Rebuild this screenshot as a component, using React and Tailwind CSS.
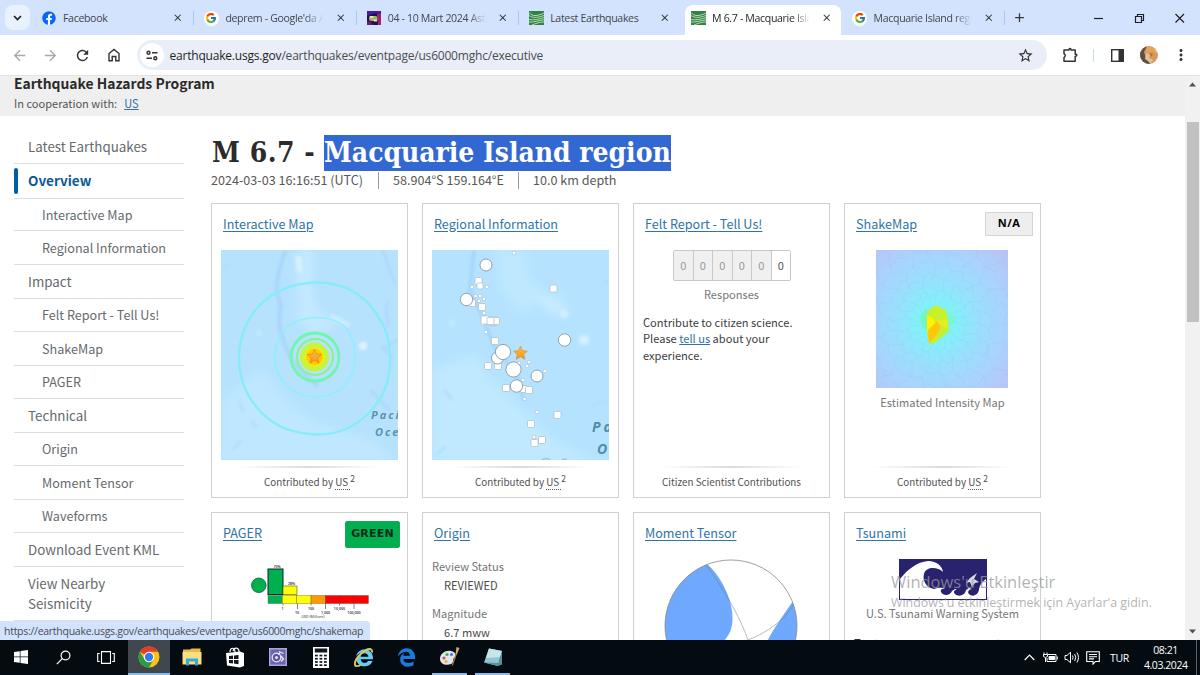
import React from "react";
import { FaFacebook, FaInternetExplorer, FaEdgeLegacy } from "react-icons/fa";
import { FcGoogle } from "react-icons/fc";
import {
  MdArrowBack,
  MdArrowForward,
  MdRefresh,
  MdStarBorder,
  MdOutlineExtension,
  MdMoreVert,
  MdClose,
  MdAdd,
} from "react-icons/md";

const STAR = "M0 -8 L2.3 -2.6 L8 -2.2 L3.7 1.6 L5 7.4 L0 4.3 L-5 7.4 L-3.7 1.6 L-8 -2.2 L-2.3 -2.6Z";

/* ---------- favicons ---------- */

function UsgsIcon() {
  return (
    <svg width="15" height="14" viewBox="0 0 15 14">
      <rect width="15" height="14" fill="#2f8440" />
      <path d="M0 1.500 C3 5.500 8 5.500 15 2 M0 4.500 C4 7.500 9 6.500 15 4.500 M0 8.500 C5 9.500 10 8 15 6.600 M0 11 C5 11.500 9 9.500 15 8.800 M3 14 C7 12.500 10 11 15 11" fill="none" stroke="#d8ecd9" strokeWidth="0.8" />
    </svg>
  );
}

function AstroIcon() {
  return (
    <svg width="14" height="14" viewBox="0 0 14 14">
      <rect width="14" height="14" fill="#1c1450" />
      <path d="M0 0H14V4L8 2L0 5Z" fill="#4a1a9a" />
      <path d="M10 3H14V14H11Z" fill="#a3206c" />
      <path d="M0 10L4 11L6 14H0Z" fill="#6a1c7a" />
      <rect x="2" y="5" width="8.500" height="5" rx="2" fill="#9db06a" />
      <path d="M2.500 5h4v2H3.500zM6 8.500h4v2H7z" fill="#e8e6a0" />
    </svg>
  );
}

function GoogleIcon() {
  return (
    <span className="flex size-[15px] items-center justify-center rounded-full bg-white">
      <FcGoogle size={12} />
    </span>
  );
}

/* ---------- browser chrome ---------- */

function Tab({ icon, title, active, divider, fade }) {
  return (
    <div
      className={
        active
          ? "flex h-[30px] w-[156px] shrink-0 items-center rounded-t-[8px] bg-white pb-[4px] pl-[6px]"
          : "flex h-[30px] w-[162.4px] shrink-0 items-center pb-[4px] pl-[9.5px]"
      }
    >
      <span className="flex w-[15px] shrink-0 justify-center">{icon}</span>
      <span
        className={
          "ml-[6.5px] w-[100px] overflow-hidden whitespace-nowrap text-[10.6px] leading-4 tracking-[-0.35px] [font-family:'Open_Sans',sans-serif] " +
          (active ? "text-[#1f1f1f] " : "text-[#42474e] ") +
          (fade ? "[mask-image:linear-gradient(to_right,black_80%,transparent_98%)]" : "")
        }
      >
        {title}
      </span>
      <span className="ml-[9px] flex w-[12px] shrink-0 justify-center text-[#30343b]">
        <MdClose size={11.5} />
      </span>
      {divider && <span className="ml-auto h-[14px] w-px bg-[#a8c7fa]" />}
    </div>
  );
}

function TabStrip() {
  return (
    <div className="flex h-[35px] shrink-0 items-end bg-[#d3e3fd]">
      <div className="flex h-full w-[32px] shrink-0 items-center pl-[5px]">
        <div className="flex size-[25px] items-center justify-center rounded-[8px] bg-[#e9f1fe]">
          <svg width="9" height="6" viewBox="0 0 9 6">
            <path d="M1 1L4.5 4.5L8 1" fill="none" stroke="#1f1f1f" strokeWidth="1.7" />
          </svg>
        </div>
      </div>
      <Tab icon={<span className="rounded-full bg-white text-[#0866ff]"><FaFacebook size={14} /></span>} title="Facebook" divider />
      <Tab icon={<GoogleIcon />} title="deprem - Google'da Ara" divider fade />
      <Tab icon={<AstroIcon />} title="04 - 10 Mart 2024 Astroloji" divider fade />
      <Tab icon={<UsgsIcon />} title="Latest Earthquakes" />
      <div className="ml-[3px]">
        <Tab icon={<UsgsIcon />} title="M 6.7 - Macquarie Island region" active fade />
      </div>
      <div className="ml-[2px]">
        <Tab icon={<GoogleIcon />} title="Macquarie Island region" divider fade />
      </div>
      <div className="flex h-[35px] flex-1 items-center pl-[7px] text-[#30343b]">
        <MdAdd size={15} />
        <svg className="ml-[64px]" width="110" height="16" viewBox="0 0 110 16" fill="none" stroke="#1f1f1f" strokeWidth="1.2">
          <path d="M3 8.5H12" />
          <path d="M44.5 6.500H50.500V12.500H44.500Z M46.500 6.500V4.500H52.500V10.500H50.500" />
          <path d="M84.500 4L93 12.500M93 4L84.500 12.500" />
        </svg>
      </div>
    </div>
  );
}

function Toolbar() {
  return (
    <div className="flex h-[41px] shrink-0 items-center border-b border-[#e3e3e3] bg-white text-[#474747]">
      <div className="flex w-[137px] shrink-0 items-center">
        <span className="ml-[11px] text-[#a9a9a9]"><MdArrowBack size={17} /></span>
        <span className="ml-[14px] text-[#a9a9a9]"><MdArrowForward size={17} /></span>
        <span className="ml-[15px] text-[#333]"><MdRefresh size={17} /></span>
        <svg className="ml-[17px]" width="12" height="14" viewBox="0 0 12 14" fill="none" stroke="#333" strokeWidth="1.4">
          <path d="M1 5.500L6 1.500L11 5.500V12.700H7.800V8.500H4.200V12.700H1Z" />
        </svg>
      </div>
      <div className="flex h-[30px] w-[910px] shrink-0 items-center rounded-full bg-[#e9eef8] pl-[3px]">
        <span className="flex size-[24px] items-center justify-center rounded-full bg-white">
          <svg width="12" height="11" viewBox="0 0 12 11" fill="none" stroke="#333" strokeWidth="1.4">
            <circle cx="2.500" cy="2.700" r="1.500" />
            <path d="M6 2.700H11.500M0.500 8.300H6" />
            <circle cx="9.300" cy="8.300" r="1.500" />
          </svg>
        </span>
        <span className="ml-[5.500px] pt-[1px] whitespace-nowrap text-[12px] leading-4 tracking-[-0.200px] text-[#4a4d52] [font-family:'Open_Sans',sans-serif]">
          <span className="text-[#1f1f1f]">earthquake.usgs.gov</span>/earthquakes/eventpage/us6000mghc/executive
        </span>
        <span className="mr-[13px] ml-auto text-[#333]"><MdStarBorder size={17} /></span>
      </div>
      <svg className="ml-[16px]" width="16" height="16" viewBox="0 0 16 16" fill="none" stroke="#333" strokeWidth="1.500" strokeLinejoin="round">
        <path d="M1 3H6V2.200Q7 0.800 8 2.200V3H12.200V7.200H13Q14.600 8.200 13 9.200H12.200V14.200H1V10.600Q3.600 8.600 1 6.600Z" />
      </svg>
      <span className="ml-[14px] h-[13px] w-px bg-[#c7dafa]" />
      <svg className="ml-[17px]" width="13" height="13" viewBox="0 0 13 13">
        <rect x="0.700" y="0.700" width="11.600" height="11.600" fill="none" stroke="#333" strokeWidth="1.400" />
        <rect x="7.500" y="1" width="5" height="11" fill="#333" />
      </svg>
      <svg className="ml-[16px]" width="18" height="18" viewBox="0 0 18 18">
        <clipPath id="avatar"><circle cx="9" cy="9" r="9" /></clipPath>
        <g clipPath="url(#avatar)">
          <rect width="18" height="18" fill="#d9985a" />
          <path d="M0 0H7L4 6L6 12L10 18H0Z" fill="#5d5046" />
          <path d="M7 0L16 3L17 8L12 5L6 7Z" fill="#e3a463" />
          <path d="M6 7L10 9L9 12L13 14L11 17L5 13Z" fill="#dcc3a4" />
          <path d="M10 7l3 1-2 3z" fill="#b9662c" />
          <path d="M15 0H18V7L16 5Z" fill="#fff" />
        </g>
      </svg>
      <span className="ml-[14px] text-[#333]"><MdMoreVert size={18} /></span>
    </div>
  );
}

/* ---------- page sidebar ---------- */

const NAV = [
  { label: "Latest Earthquakes", h: "h-[34px]" },
  { label: "Overview", h: "h-[35px]", current: true },
  { label: "Interactive Map", h: "h-[32px]", sub: true },
  { label: "Regional Information", h: "h-[34px]", sub: true },
  { label: "Impact", h: "h-[34px]" },
  { label: "Felt Report - Tell Us!", h: "h-[33px]", sub: true },
  { label: "ShakeMap", h: "h-[34px]", sub: true },
  { label: "PAGER", h: "h-[33px]", sub: true },
  { label: "Technical", h: "h-[34px]" },
  { label: "Origin", h: "h-[33px]", sub: true },
  { label: "Moment Tensor", h: "h-[34px]", sub: true },
  { label: "Waveforms", h: "h-[33px]", sub: true },
  { label: "Download Event KML", h: "h-[34px]" },
  { label: "View Nearby Seismicity", h: "h-[54px]" },
];

function Sidebar() {
  return (
    <nav className="ml-[14px] w-[170px] shrink-0 pt-[14px]">
      {NAV.map((n) => (
        <div key={n.label} className={"flex items-center border-b border-[#dcdee0] " + n.h}>
          {n.current && <span className="h-[26px] w-[4px] rounded-full bg-[#005ea2]" />}
          <a
            className={
              "leading-[19.500px] " +
              (n.current
                ? "pl-[10px] text-[13.500px] font-bold text-[#0a5a99]"
                : n.sub
                  ? "pl-[28px] text-[12.600px] text-[#666a6e]"
                  : "w-[150px] pl-[14px] text-[13.350px] text-[#666a6e]")
            }
          >
            {n.label}
          </a>
        </div>
      ))}
    </nav>
  );
}

/* ---------- cards ---------- */

function Card({ title, badge, children, footer }) {
  return (
    <section className="flex h-[295px] w-[197px] flex-col border border-[#d0d0d0] bg-white">
      <header className="flex h-[46px] shrink-0 items-center justify-between pr-[7px] pb-[7px] pl-[11px]">
        <a className="text-[12.600px] leading-4 text-[#2e74a8] underline underline-offset-2">{title}</a>
        {badge}
      </header>
      <div className="flex flex-1 flex-col">{children}</div>
      {footer && (
        <footer className="shrink-0 pb-[7px]">
          <div className="mx-[28px] h-[2px] bg-[linear-gradient(to_right,transparent,#dadada,transparent)]" />
          <div className="mt-[6px] text-center text-[9.850px] leading-4 text-[#505050]">{footer}</div>
        </footer>
      )}
    </section>
  );
}

function Contributed() {
  return (
    <span>
      Contributed by <span className="border-b border-dotted border-[#555]">US </span>
      <sup className="text-[8.500px]">2</sup>
    </span>
  );
}

function Star({ x, y, s }) {
  return <path d={STAR} transform={`translate(${x} ${y}) scale(${s})`} fill="url(#starFill)" stroke="#e08a1e" strokeWidth="0.8" strokeLinejoin="round" />;
}

function MapDefs() {
  return (
    <defs>
      <linearGradient id="starFill" x1="0" y1="0" x2="0" y2="1">
        <stop offset="0" stopColor="#ffc13a" />
        <stop offset="1" stopColor="#f7941d" />
      </linearGradient>
      <filter id="soft" x="-50%" y="-50%" width="200%" height="200%"><feGaussianBlur stdDeviation="4" /></filter>
      <filter id="softer" x="-50%" y="-50%" width="200%" height="200%"><feGaussianBlur stdDeviation="1.800" /></filter>
    </defs>
  );
}

function InteractiveMap() {
  return (
    <svg className="ml-[9px] h-[210px] w-[177px] shrink-0" viewBox="0 0 177 210">
      <MapDefs />
      <rect width="177" height="211" fill="#b6e2fe" />
      <g filter="url(#soft)">
        <path d="M78 0L92 0L90 40L100 70L84 74L76 40Z" fill="#c5eaff" />
        <path d="M0 150L40 120L66 150L90 170L150 190L177 211H0Z" fill="#bfe7ff" />
        <path d="M70 60L100 62L116 78L90 84Z" fill="#c3e9ff" />
      </g>
      <g filter="url(#softer)" fill="none">
        <path d="M65 0C57 20 52 38 60 56C54 78 64 95 72 112C82 124 90 130 97 136" stroke="#a9d6f8" strokeWidth="4" />
        <path d="M162 0L174 34M168 52C160 60 170 66 166 78M177 90L162 98L172 108M168 160L150 140" stroke="#add9f8" strokeWidth="3" />
        <path d="M0 22L6 14M18 150L22 162M12 200L20 190M30 170L36 178" stroke="#b4def9" strokeWidth="3" />
        <path d="M77 6L79 22" stroke="#d7f1ff" strokeWidth="6" />
        <path d="M110 66L128 76" stroke="#ccedff" strokeWidth="6" />
        <circle cx="142" cy="96" r="4" fill="#dff4ff" />
        <circle cx="38" cy="83" r="2.500" fill="#caecff" />
      </g>
      <path d="M94 32.500Q134 32 155 63Q170 84 169 108Q170 141 148 163Q127 184 98 184.500Q61 184 41 163Q18 140 18 108Q18 79 37 57Q58 34 94 32.500Z" fill="none" stroke="#86ecfb" strokeWidth="2.400" />
      <path d="M94 67.500Q115 67 126 79Q135 92 134 108Q133 128 120 139Q108 147 94 147Q76 146 65 135Q53 122 54 107Q54 91 64 79Q76 68 94 67.500Z" fill="none" stroke="#8ff0fa" strokeWidth="1.700" />
      <circle cx="94" cy="107" r="24" fill="none" stroke="#6ef7ad" strokeWidth="2.800" />
      <circle cx="94" cy="107" r="18" fill="none" stroke="#83f583" strokeWidth="1.800" />
      <circle cx="93.500" cy="107" r="12" fill="#fff000" stroke="#c5f43d" strokeWidth="5" />
      <circle cx="93.500" cy="107" r="8.500" fill="#ffcc00" />
      <Star x={93.500} y={106.500} s={0.900} />
      <g className="[font-family:'Open_Sans',sans-serif]" fill="#5b92ad" fontSize="11" fontWeight="700" fontStyle="italic" letterSpacing="2">
        <text x="150" y="169">Pacific</text>
        <text x="154" y="186">Ocean</text>
      </g>
    </svg>
  );
}

const SQUARES = [
  [46.500, 31, 7], [48, 36, 6], [121.500, 38.500, 7], [40, 53, 7], [50, 57, 7], [53, 70, 8], [61, 71, 9], [64, 71, 7],
  [58.500, 71, 7], [63, 91, 7], [56, 116, 7], [66, 116, 7], [74, 138, 7], [92, 139, 7], [97, 140, 7], [125.500, 165, 7],
  [99, 174, 7], [110, 190, 7], [102.500, 193, 7],
];
const DOTS = [
  [82, 3], [40, 37], [55, 37], [43.500, 46], [48, 46], [52, 49], [47, 51], [52, 63], [51, 74], [62, 75], [54, 82],
  [97, 112], [95, 116], [113, 121], [91, 130], [92.500, 149], [105, 162], [102, 187], [87, 113],
];
const CIRCLES = [
  [54, 15, 6], [34.500, 49.500, 6.200], [132.500, 90, 6.200], [65.500, 108, 6], [71, 102, 7.600], [81.500, 119.500, 7.600],
  [105, 126, 6], [84.500, 136, 6.200],
];

function RegionalMap() {
  return (
    <svg className="ml-[9px] h-[210px] w-[177px] shrink-0" viewBox="0 0 177 210">
      <rect width="177" height="211" fill="#b5e3ff" />
      <g filter="url(#soft)">
        <path d="M64 0L92 0L96 30L120 48L90 62L70 40Z" fill="#bfe8ff" />
        <path d="M0 120L44 105L58 130L80 150L120 190L160 211H0Z" fill="#c0e9ff" />
        <path d="M104 48L126 46L136 66L118 62Z" fill="#c8ecfe" />
      </g>
      <g filter="url(#softer)" fill="none">
        <path d="M42 0L38 40L50 66L62 96L84 124L92 150" stroke="#a6d6f9" strokeWidth="4" />
        <path d="M12 140L20 150M4 205L14 196M172 34L177 28M160 156L176 150" stroke="#b1dffb" strokeWidth="3" />
        <circle cx="152" cy="90" r="5" fill="#d4f1ff" />
        <circle cx="132" cy="64" r="4" fill="#cfefff" />
        <circle cx="20" cy="73" r="3" fill="#c3eaff" />
      </g>
      <g fill="#fff" stroke="#a9bcc8">
        {DOTS.map(([x, y], i) => <rect key={i} x={x - 1.500} y={y - 1.500} width="3" height="3" rx="0.800" strokeWidth="0.600" />)}
        {SQUARES.map(([x, y, s], i) => <rect key={i} x={x - s / 2} y={y - s / 2} width={s} height={s} rx="1.300" strokeWidth="0.700" />)}
      </g>
      <g fill="#fff" stroke="#8a979f" strokeWidth="0.900">
        {CIRCLES.map(([x, y, r], i) => <circle key={i} cx={x} cy={y} r={r} />)}
      </g>
      <Star x={88.500} y={103} s={0.850} />
      <g className="[font-family:'Open_Sans',sans-serif]" fill="#4f8cab" fontSize="14" fontWeight="700" fontStyle="italic" letterSpacing="3">
        <text x="160" y="182">Pacific</text>
        <text x="165" y="204">Ocean</text>
      </g>
      <path d="M110 209.500q6-2 8 0M130 209.500q3-1 5 0" stroke="#8fb9cc" fill="none" />
    </svg>
  );
}

const SPOKES = Array.from({ length: 22 }, (_, i) => i);

function ShakeMap() {
  return (
    <svg className="ml-[31px] h-[138px] w-[132px] shrink-0" viewBox="0 0 132 138">
      <defs>
        <radialGradient id="shake" cx="0.460" cy="0.520" r="0.720">
          <stop offset="0" stopColor="#66f5e6" />
          <stop offset="0.200" stopColor="#82f1fa" />
          <stop offset="0.450" stopColor="#9adffd" />
          <stop offset="0.700" stopColor="#a9d3fe" />
          <stop offset="1" stopColor="#b9c4f6" />
        </radialGradient>
      </defs>
      <rect width="132" height="138" fill="url(#shake)" />
      <g fill="none" stroke="#8ba7d6" strokeOpacity="0.220" strokeWidth="0.500">
        {SPOKES.map((i) => {
          const a = (i / 22) * Math.PI * 2;
          const k = 1 + 0.1 * Math.sin(i * 2.4);
          const p = (r, o) => `${61 + r * k * Math.cos(a + o)} ${72 + r * k * Math.sin(a + o)}`;
          return <path key={i} d={`M${p(18, 0)}L${p(28, 0.140)}L${p(40, 0)}L${p(52, 0.130)}L${p(66, 0)}L${p(82, 0.120)}L${p(100, 0)}M${p(28, 0.140)}L${p(30, 0.280)}L${p(28, 0.420)}M${p(40, 0)}L${p(44, 0.140)}L${p(40, 0.280)}M${p(52, 0.130)}L${p(56, 0.280)}L${p(52, 0.400)}M${p(66, 0)}L${p(70, 0.140)}L${p(66, 0.280)}M${p(82, 0.120)}L${p(82, 0.400)}`} />;
        })}
      </g>
      <path d="M51 58L44 66L46 76L51 80Z" fill="#75f5c0" />
      <path d="M70 60L82 70L73 76Z" fill="#78f7d6" />
      <path d="M59 55L70 60L72 70L73 81L60 92L53 94L51 82V62Z" fill="#c9f02c" />
      <path d="M51 65L57 68L60 75L51 82Z" fill="#fff200" />
      <path d="M60 71L71 69L72 77L64 76Z" fill="#e3ed20" />
      <path d="M52 80L61 71L65 77L60 86L53 93Z" fill="#ffc60a" />
      <path d="M65 78L73 80L60 91Z" fill="#bdf03b" />
    </svg>
  );
}

function FeltReport() {
  return (
    <>
      <div className="ml-[1px] flex h-[31px] w-[118px] self-center overflow-hidden rounded-[2px] border border-[#c8c8c8]">
        {[0, 1, 2, 3, 4, 5].map((i) => (
          <span
            key={i}
            className={
              i === 5
                ? "flex flex-1 items-center justify-center bg-white pb-px text-[11px] text-[#555]"
                : "flex flex-1 items-center justify-center border-r border-[#c8c8c8] bg-[#f0f0f0] pb-px text-[11px] text-[#999]"
            }
          >
            0
          </span>
        ))}
      </div>
      <p className="mt-[5px] text-center text-[11.100px] leading-4 text-[#777]">Responses</p>
      <p className="mt-[12px] ml-[9px] w-[165px] text-[11.100px] leading-[16.300px] text-[#3d3d3d]">
        Contribute to citizen science. Please <a className="text-[#2e74a8] underline">tell us</a> about your experience.
      </p>
    </>
  );
}

function PagerChart() {
  const cells = ["#00b04f", "#ffff00", "#ffff00", "#ff9900", "#ff0000", "#ff0000", "#ff0000"];
  const labels = [["1", 282.500, 608.500], ["10", 297, 612.500], ["100", 311, 608.500], ["1,000", 325.500, 612.500], ["10,000", 339.500, 608.500], ["100,000", 354, 612.500]];
  return (
    <svg className="ml-[30px] h-[60px] w-[140px] shrink-0" viewBox="242 559 140 60">
      <circle cx="258.800" cy="585.300" r="7.300" fill="#00b04f" stroke="#1b5a35" strokeWidth="0.800" />
      <rect x="268" y="569" width="15" height="25.500" fill="#00b04f" stroke="#123" strokeWidth="1" />
      <rect x="283" y="586" width="14" height="8.500" fill="#ff0" stroke="#555500" strokeWidth="0.600" />
      {cells.map((c, i) => <rect key={i} x={268 + i * 14.350} y="595.500" width="14.350" height="8" fill={c} stroke="#332" strokeOpacity="0.600" strokeWidth="0.500" />)}
      <path d="M297.500 603.500V609M325.500 603.500V609M354 603.500V609M283 603.500V605.500M311 603.500V605.500M339.500 603.500V605.500" stroke="#333" strokeWidth="0.600" />
      <g className="[font-family:'Open_Sans',sans-serif]" fontSize="3.600" fill="#222" textAnchor="middle" fontWeight="600">
        <text x="277" y="568">70%</text>
        <text x="291.500" y="585">28%</text>
        {labels.map(([t, x, y]) => <text key={t} x={x} y={y + 1}>{t}</text>)}
        <text x="313" y="618" fontWeight="400">USD (Millions)</text>
      </g>
    </svg>
  );
}

function BeachBall() {
  return (
    <svg className="ml-[30px] h-[134px] w-[134px] shrink-0" viewBox="0 0 134 134">
      <clipPath id="ball"><circle cx="67" cy="67" r="66" /></clipPath>
      <g clipPath="url(#ball)">
        <rect width="134" height="134" fill="#fff" />
        <path d="M43 5C56 16 66 36 68 52C70 68 66 76 58 84L40 134H0V0H40Z" fill="#6fa8ff" />
        <path d="M129 42C118 58 108 72 103 83L90 134H134V42Z" fill="#6fa8ff" />
      </g>
      <path d="M42 6C60 30 76 58 84 81C102 74 120 62 130 45" fill="none" stroke="#777" strokeOpacity="0.550" strokeWidth="0.900" />
      <circle cx="67" cy="67" r="66" fill="none" stroke="#888" strokeWidth="0.800" />
    </svg>
  );
}

function TsunamiLogo() {
  return (
    <svg className="h-[41px] w-[88px] shrink-0 self-center" viewBox="0 0 88 41">
      <rect width="88" height="41" fill="#28226f" />
      <path d="M1 20C9 10 18 3 29 2C38 2 43 7 44 13C39 8 27 7 25 15C23 22 28 29 35 30C39 29 43 28 46 30C43 29 41 31 42 33C44 37 51 37 53 32L56 30L58 31C55 31 54 33 56 35C59 38 66 37 67 31L70 29L73 30C70 30 68 33 70 35C74 39 80 35 80 30C81 25 84 22 87 20V40H1Z" fill="#fff" />
      <path d="M78 14l-3 6 5 3-4 1-3 4-2-5-4 1 4-5z" fill="#d8d8e4" />
    </svg>
  );
}

function Meta({ label, value }) {
  return (
    <>
      <dt className="pl-[9px] text-[11.100px] leading-[19px] text-[#757575]">{label}</dt>
      <dd className="pl-[21px] text-[11.100px] leading-[19px] text-[#4a4a4a]">{value}</dd>
    </>
  );
}

function Content() {
  return (
    <main className="ml-[27px] w-[831px] shrink-0">
      <h1 className="mt-[19px] flex h-[36px] pl-px text-[28px] leading-[36px] font-bold whitespace-pre text-[#2b2b2b] [font-family:'DejaVu_Serif_Condensed','DejaVu_Serif',serif]">
        <span className="w-[112px] tracking-[0.500px]">M 6.7 - </span>
        <span className="h-[36px] w-[347px] bg-[#3367d1] tracking-[-0.040px] text-white">Macquarie Island region</span>
      </h1>
      <div className="flex h-[19px] items-center text-[12.600px] leading-4 text-[#585858]">
        <span className="w-[167px] pb-px">2024-03-03 16:16:51 (UTC)</span>
        <span className="flex h-[17px] w-[140px] items-center border-l border-[#999] pb-px pl-[14px]">58.904°S 159.164°E</span>
        <span className="flex h-[17px] items-center border-l border-[#999] pb-px pl-[14px]">10.0 km depth</span>
      </div>
      <div className="mt-[13px] grid grid-cols-[repeat(4,197px)] gap-x-[14px] gap-y-[14px]">
        <Card title="Interactive Map" footer={<Contributed />}><InteractiveMap /></Card>
        <Card title="Regional Information" footer={<Contributed />}><RegionalMap /></Card>
        <Card title="Felt Report - Tell Us!" footer="Citizen Scientist Contributions"><FeltReport /></Card>
        <Card
          title="ShakeMap"
          footer={<Contributed />}
          badge={<span className="flex h-[24px] w-[48px] items-center justify-center border border-[#d4d4d4] bg-[#eee] text-[11px] font-bold tracking-[0.500px] text-black [font-family:'Open_Sans',sans-serif]">N/A</span>}
        >
          <ShakeMap />
          <p className="mt-[6px] text-center text-[11.100px] leading-4 text-[#777]">Estimated Intensity Map</p>
        </Card>
        <Card
          title="PAGER"
          badge={<span className="mt-[4px] flex h-[27px] w-[55px] items-center justify-center rounded-[2px] border border-[#1ea557] bg-[#00b04f] text-[11px] font-bold tracking-[0.200px] text-[#0c2c18] [font-family:'DejaVu_Sans',sans-serif]">GREEN</span>}
        >
          <PagerChart />
          <p className="mt-[14px] pl-[28px] text-[11.100px] leading-4 text-[#666]">Estimated Economic Losses</p>
        </Card>
        <Card title="Origin">
          <dl className="-mt-[2px] flex flex-col">
            <Meta label="Review Status" value="REVIEWED" />
            <div className="h-[9px]" />
            <Meta label="Magnitude" value="6.7 mww" />
          </dl>
        </Card>
        <Card title="Moment Tensor"><BeachBall /></Card>
        <Card title="Tsunami">
          <TsunamiLogo />
          <p className="mt-[5px] text-center text-[11.100px] leading-4 text-[#777]">U.S. Tsunami Warning System</p>
          <p className="mt-[14px] ml-[9px] text-[11.100px] leading-4 text-[#333]">To view any current tsunami</p>
        </Card>
      </div>
    </main>
  );
}

function Scrollbar() {
  return (
    <div className="flex h-full w-[15px] shrink-0 flex-col items-center bg-[#f1f1f1]">
      <svg className="mt-[6px]" width="7" height="5" viewBox="0 0 7 5"><path d="M0 4.500L3.500 0.500L7 4.500Z" fill="#505050" /></svg>
      <div className="mt-[35px] h-[200px] w-[12px] bg-[#c1c1c1]" />
      <svg className="mt-auto mb-[6px]" width="7" height="5" viewBox="0 0 7 5"><path d="M0 0.500L3.500 4.500L7 0.500Z" fill="#505050" /></svg>
    </div>
  );
}

/* ---------- taskbar ---------- */

function ChromeLogo() {
  return (
    <svg width="22" height="22" viewBox="0 0 22 22">
      <circle cx="11" cy="11" r="10.500" fill="#fbc116" />
      <path d="M1.900 5.750A10.500 10.500 0 0 1 20.100 5.750H11L6.500 8.400Z" fill="#e33b2e" />
      <path d="M1.900 5.750A10.500 10.500 0 0 0 11 21.500L15.500 13.600L11 16L6.500 13.600Z" fill="#2a9b47" />
      <circle cx="11" cy="11" r="5.200" fill="#fff" />
      <circle cx="11" cy="11" r="4.200" fill="#3b78e7" />
    </svg>
  );
}

function Slot({ children, w, open, active }) {
  return (
    <div className={"flex h-full shrink-0 flex-col items-center " + w + (active ? " bg-[#41484d]" : "")}>
      <div className="flex flex-1 items-center pt-[1px]">{children}</div>
      <div className={"h-[2px] " + (active ? "w-full bg-[#85bce8]" : open ? "w-[35px] bg-[#85bce8]" : "w-0")} />
    </div>
  );
}

function Taskbar() {
  const w = "w-[43px]";
  return (
    <div className="flex h-[35px] shrink-0 bg-[#040c12] text-white">
      <Slot w="w-[42px]">
        <svg width="14" height="14" viewBox="0 0 14 14" fill="#fff"><path d="M0 2L5.800 1.200V6.600H0ZM6.500 1.100L14 0V6.600H6.500ZM0 7.300H5.800V12.700L0 11.900ZM6.500 7.300H14V14L6.500 12.900Z" /></svg>
      </Slot>
      <Slot w="w-[42px]">
        <svg width="15" height="15" viewBox="0 0 15 15" fill="none" stroke="#fff" strokeWidth="1.200"><circle cx="9.500" cy="5.500" r="4.400" /><path d="M6.300 8.700L0.800 14.200" /></svg>
      </Slot>
      <Slot w="w-[44px]">
        <svg width="18" height="13" viewBox="0 0 18 13" fill="none" stroke="#fff" strokeWidth="1.100"><path d="M4.500 0.600H13.500V12.400H4.500ZM2.800 2.500H0.700V10.500H2.800M15.200 2.500H17.300V10.500H15.200" /></svg>
      </Slot>
      <Slot w="w-[42px]" active><ChromeLogo /></Slot>
      <Slot w={w}>
        <svg width="20" height="18" viewBox="0 0 20 18">
          <path d="M1 1.500H8L9.500 0.500H18.500V16H1Z" fill="#e9b949" />
          <path d="M0.500 4H19.500V16.500H0.500Z" fill="#fbdd83" />
          <path d="M4 17.500V10.500H16V17.500H13V13.500H7V17.500Z" fill="#35a8dc" />
        </svg>
      </Slot>
      <Slot w={w}>
        <svg width="20" height="21" viewBox="0 0 20 21">
          <path d="M5 5C5 0 10 0 10 5M8 4C9 0 14 0 14 5" fill="none" stroke="#fff" strokeWidth="1.200" />
          <path d="M1 6L15 4.500L19 6V19L15 20.500L2 18.500Z" fill="#fff" />
          <path d="M4 9L8 8.500V12H4ZM9 8.400L13.500 8V12H9ZM4 13H8V16.500L4 16ZM9 13H13.500V17.200L9 16.600Z" fill="#10161c" />
        </svg>
      </Slot>
      <Slot w={w}>
        <svg width="18" height="18" viewBox="0 0 18 18">
          <rect width="18" height="18" fill="#a9a4dc" /><rect x="1.500" y="1.500" width="15" height="15" fill="#6d64ae" />
          <circle cx="7.500" cy="9.500" r="4.300" fill="#5c549d" stroke="#e6e4f6" strokeWidth="1.300" /><circle cx="7.500" cy="9.500" r="1.500" fill="#e6e4f6" />
          <path d="M10 3.500L14.500 5.500M12 8L14.500 11L12 13.500M11 5L9 6.500" stroke="#f1effa" strokeWidth="1.200" fill="none" />
        </svg>
      </Slot>
      <Slot w={w}>
        <svg width="16" height="21" viewBox="0 0 16 21">
          <rect width="16" height="21" fill="#fff" /><rect x="1.800" y="1.500" width="12.400" height="4" fill="#10161c" />
          {[0, 1, 2, 3].flatMap((r) => [0, 1, 2].map((c) => <rect key={`${r}${c}`} x={2 + c * 4.500} y={7.700 + r * 3.200} width="2.800" height="1.700" fill="#10161c" />))}
        </svg>
      </Slot>
      <Slot w={w}>
        <span className="relative text-[#66cdf5]">
          <FaInternetExplorer size={19} />
          <svg className="absolute inset-0" width="19" height="19" viewBox="0 0 19 19" fill="none" stroke="#f4c22c" strokeWidth="1.700">
            <path d="M18 4.500C18.500 1 15.500 0.500 11.500 2.600C6 5.500 0.800 11.500 0.900 15.800C1 18.500 4 18.500 6.500 17" />
          </svg>
        </span>
      </Slot>
      <Slot w={w}>
        <span className="text-[#1b7bdc]"><FaEdgeLegacy size={19} /></span>
      </Slot>
      <Slot w={w} open>
        <svg width="22" height="20" viewBox="0 0 22 20">
          <path d="M1 12C1 6 7 3 12 4C17 5 18 9 15 11C13 12 16 15 12 17C7 19 1 17 1 12Z" fill="#dfe6ee" />
          <circle cx="5" cy="11" r="1.600" fill="#e2543d" /><circle cx="8" cy="7.500" r="1.600" fill="#4ba94d" /><circle cx="12.500" cy="7.500" r="1.500" fill="#3c7dd6" /><circle cx="7" cy="14.500" r="1.600" fill="#f1b52d" />
          <path d="M17.500 0L20.500 1L18 7L16.500 7Z" fill="#d8a56b" /><path d="M16.500 7L18 7L14 18L12.500 19Z" fill="#b9793c" />
        </svg>
      </Slot>
      <Slot w={w} open>
        <svg width="20" height="19" viewBox="0 0 20 19">
          <path d="M6 0.500L19 3L15 18L1 14.500Z" fill="#8fc6d2" /><path d="M6 0.500L19 3L17 9L3 10Z" fill="#c6e6ea" />
          <path d="M1 14.500L15 18L19 16.500L19 3L15.500 15Z" fill="#5a8f9c" />
        </svg>
      </Slot>
      <div className="ml-auto flex items-center">
        <svg width="11" height="7" viewBox="0 0 11 7" fill="none" stroke="#fff" strokeWidth="1.200"><path d="M0.700 6L5.500 1.200L10.300 6" /></svg>
        <svg className="ml-[8px]" width="15" height="11" viewBox="0 0 15 11" fill="none" stroke="#fff" strokeWidth="1">
          <path d="M5 2.500H13V9.500H4V6M1 0.500V2.500M4 0.500V2.500M0.500 2.500H4.500V4.500Q2.500 6.500 0.500 4.500ZM2.500 6V10" /><path d="M6 4.500H11.500V7.500H6Z" fill="#fff" /><path d="M14.300 4.500V7.500" />
        </svg>
        <svg className="ml-[6px]" width="16" height="13" viewBox="0 0 16 13" fill="none" stroke="#fff" strokeWidth="1"><path d="M1 4.500H3L6.500 1.200V11.800L3 8.500H1ZM8.500 4.500Q9.800 6.500 8.500 8.500M10.700 3Q12.800 6.500 10.700 10M12.900 1.500Q16 6.500 12.900 11.500" /></svg>
        <svg className="ml-[6px]" width="14" height="14" viewBox="0 0 14 14" fill="none" stroke="#fff" strokeWidth="1.100"><path d="M0.700 0.800H13.300V10.500H9.500L7 13.200V10.500H0.700ZM3 3.500H11M3 5.700H11M3 7.900H8" /></svg>
        <span className="ml-[10px] w-[20px] text-[10.500px] leading-4 tracking-[-0.300px] [font-family:'Open_Sans',sans-serif]">TUR</span>
        <div className="ml-[14px] w-[43px] text-center text-[10.500px] leading-[15px] tracking-[-0.450px] whitespace-nowrap [font-family:'Open_Sans',sans-serif]">
          <div>08:21</div>
          <div>4.03.2024</div>
        </div>
        <div className="ml-[9px] h-[35px] w-[4px] border-l border-[#5a6268]" />
      </div>
    </div>
  );
}

export default function App() {
  return (
    <div className="relative flex h-[675px] w-[1200px] flex-col overflow-hidden bg-white [font-family:'Noto_Sans_CJK_SC','Noto_Sans',sans-serif]">
      <TabStrip />
      <Toolbar />
      <div className="flex min-h-0 flex-1 overflow-hidden">
        <div className="min-w-0 flex-1">
          <header className="h-[40px] bg-[#efefef] pl-[14px]">
            <div className="text-[13.900px] leading-[15px] font-bold text-[#2a2a2a]">Earthquake Hazards Program</div>
            <div className="mt-[4px] flex gap-[7px] text-[11.050px] leading-4 text-[#555]">
              <span>In cooperation with:</span>
              <a className="text-[#2e74a8] underline">US</a>
            </div>
          </header>
          <div className="flex">
            <Sidebar />
            <Content />
          </div>
        </div>
        <Scrollbar />
      </div>
      <Taskbar />
      <div className="absolute top-[621px] left-0 flex h-[19px] w-[370px] items-center rounded-tr-[4px] bg-[#d3e3fd] pl-[4px] text-[10.500px] leading-4 tracking-[-0.270px] whitespace-nowrap text-[#474c55] [font-family:'Open_Sans',sans-serif]">
        https://earthquake.usgs.gov/earthquakes/eventpage/us6000mghc/shakemap
      </div>
      <div className="absolute top-[571px] left-[891px] whitespace-nowrap text-[#999]/75 [font-family:'Open_Sans',sans-serif]">
        <div className="text-[16.500px] leading-[22px]">Windows'u Etkinleştir</div>
        <div className="text-[12.450px] leading-[19px]">Windows'u etkinleştirmek için Ayarlar'a gidin.</div>
      </div>
    </div>
  );
}
